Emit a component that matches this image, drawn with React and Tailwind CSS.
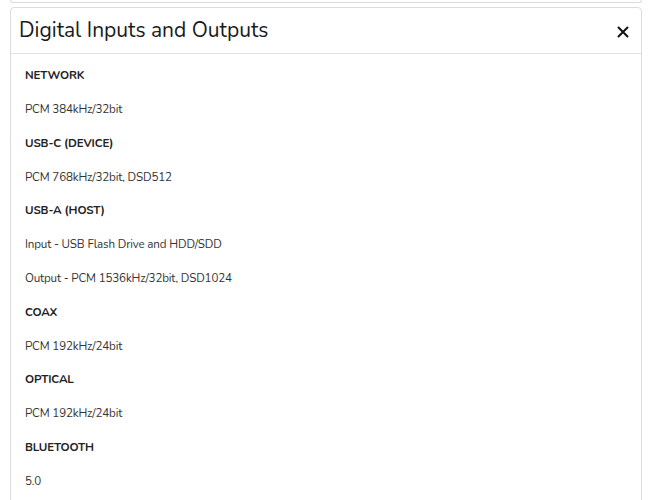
const specs = [
  { label: 'NETWORK', values: ['PCM 384kHz/32bit'] },
  { label: 'USB-C (DEVICE)', values: ['PCM 768kHz/32bit, DSD512'] },
  { label: 'USB-A (HOST)', values: ['Input - USB Flash Drive and HDD/SDD', 'Output - PCM 1536kHz/32bit, DSD1024'] },
  { label: 'COAX', values: ['PCM 192kHz/24bit'] },
  { label: 'OPTICAL', values: ['PCM 192kHz/24bit'] },
  { label: 'BLUETOOTH', values: ['5.0'] },
];

function Row({ children, bold }) {
  return (
    <div
      className={`h-[33.8px] flex items-center text-[11.6px] tracking-[-0.15px] ${bold ? 'font-bold text-[#222]' : 'text-[#333]'}`}
    >
      {children}
    </div>
  );
}

export default function App() {
  return (
    <div className="w-[650px] h-[500px] bg-white overflow-hidden font-['Nunito','Lato','Noto_Sans',sans-serif] relative">
      {/* tail of the previous card */}
      <div className="ml-[10px] mr-[8px] h-[3px] border-x border-b border-[#dcdcdc] rounded-b-[4px]" />

      <div className="mt-[4px] ml-[10px] mr-[8px] border border-[#dcdcdc] rounded-t-[4px] min-h-[600px]">
        <div className="h-[46px] flex items-center justify-between pl-[8px] pr-[12px] border-b border-[#e2e2e2]">
          <h2 className="text-[21px] text-[#1a1a1a] font-normal">Digital Inputs and Outputs</h2>
          <svg width="12" height="12" viewBox="0 0 12 12" className="mt-[2px]">
            <path d="M1.5 1.5 L10.5 10.5 M10.5 1.5 L1.5 10.5" stroke="#111" strokeWidth="2" strokeLinecap="round" />
          </svg>
        </div>

        <div className="pl-[14px] pt-[5px]">
          {specs.map((s) => (
            <div key={s.label}>
              <Row bold>{s.label}</Row>
              {s.values.map((v) => (
                <Row key={v}>{v}</Row>
              ))}
            </div>
          ))}
        </div>
      </div>
    </div>
  );
}
